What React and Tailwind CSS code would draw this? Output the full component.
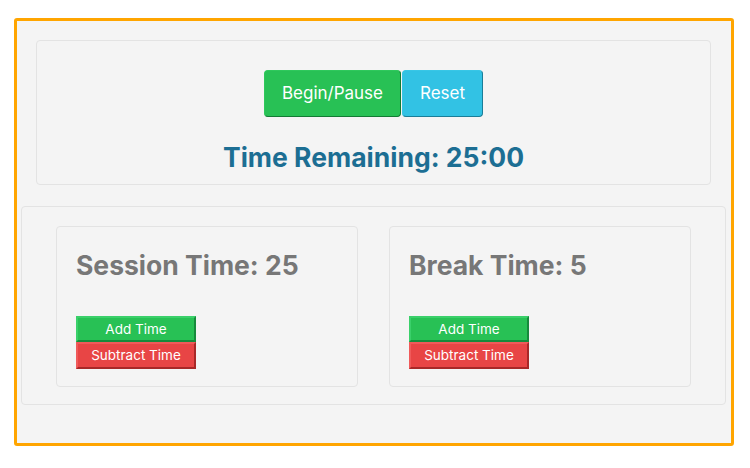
export default function App() {
  const font = { fontFamily: 'Inter, "Noto Sans", sans-serif' };
  const Card = ({ title, className }) => (
    <div className={`w-[302px] h-[161px] border border-[#e3e3e3] rounded-[4px] bg-[#f4f4f4] pt-[22px] pl-[19px] ${className}`}>
      <h2 className="text-[26.5px] leading-[32px] font-bold text-[#777777]">{title}</h2>
      <div className="mt-[35px] flex flex-col w-[120px]">
        <button className="h-[26px] text-[13.5px] text-white bg-[#28c155] border-2 border-t-[#3ad06a] border-l-[#3ad06a] border-b-[#168a3b] border-r-[#168a3b]">
          Add Time
        </button>
        <button className="h-[27px] text-[13.5px] text-white bg-[#e84545] border-2 border-t-[#f05a5a] border-l-[#f05a5a] border-b-[#a82828] border-r-[#a82828]">
          Subtract Time
        </button>
      </div>
    </div>
  );
  return (
    <div className="w-[750px] h-[468px] bg-white pt-[18px] pl-[14px]" style={font}>
      <div className="w-[720px] h-[428px] border-[3px] border-[#ffa500] rounded-[3px] bg-[#f4f4f4] pt-[19px]">
        <div className="ml-[19px] w-[675px] h-[145px] border border-[#e3e3e3] rounded-[4px] flex flex-col items-center pt-[29px]">
          <div className="flex">
            <button className="h-[47px] px-[17px] text-[17px] text-white bg-[#28c155] rounded-[4px] border-[1.5px] border-t-[#2fc85c] border-l-[#2fc85c] border-b-[#137a34] border-r-[#137a34]">
              Begin/Pause
            </button>
            <button className="h-[47px] px-[17px] ml-[1px] text-[17px] text-white bg-[#32c2e4] rounded-[4px] border-[1.5px] border-t-[#38c6e6] border-l-[#38c6e6] border-b-[#1a7d98] border-r-[#1a7d98]">
              Reset
            </button>
          </div>
          <h1 className="mt-[24px] text-[26.5px] leading-[32px] font-bold text-[#1c6e93]">Time Remaining: 25:00</h1>
        </div>
        <div className="ml-[4px] mt-[21px] w-[705px] h-[199px] border border-[#e3e3e3] rounded-[4px] flex pt-[19px] pl-[34px]">
          <Card title="Session Time: 25" />
          <Card title="Break Time: 5" className="ml-[31px]" />
        </div>
      </div>
    </div>
  );
}
